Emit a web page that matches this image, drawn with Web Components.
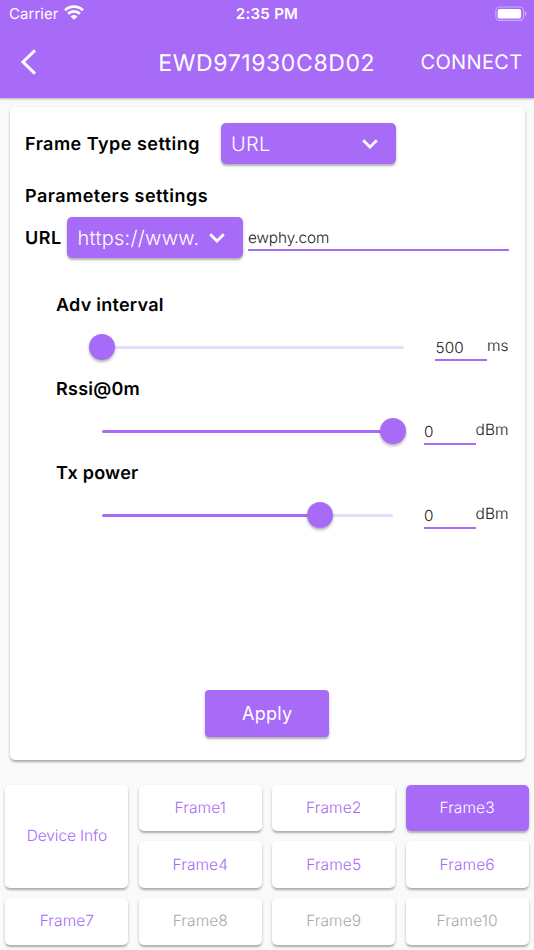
<!DOCTYPE html>
<html lang="en">
<head>
<meta charset="utf-8">
<title>Beacon settings</title>
<style>
  html {
    --accent: #a76bf7;
    --accent-soft: #e9dbfd;
    --shadow: 0 3px 1px -1px rgba(0,0,0,.1), 0 2px 3px rgba(0,0,0,.2), 0 1px 4px rgba(0,0,0,.06);
  }
  body {
    margin: 0;
    height: 950px;
    overflow: hidden;
    background: #fafafa;
    font-family: Inter, "Liberation Sans", sans-serif;
    text-rendering: geometricPrecision;
  }
</style>
</head>
<body>
<beacon-app></beacon-app>

<script>
function makeTemplate(html) {
  const template = document.createElement("template");
  template.innerHTML = html;
  return template;
}

class BaseElement extends HTMLElement {
  constructor() {
    super();
    this.attachShadow({ mode: "open" });
    this.shadowRoot.appendChild(this.constructor.template.content.cloneNode(true));
  }
}

class StatusBar extends BaseElement {
  static template = makeTemplate(`
    <style>
    :host {
      display: grid;
      grid-template-columns: 1fr auto 1fr;
      align-items: center;
      height: 28px;
      padding: 0 7px 0 9px;
      color: white;
      font-size: 15px;
    }
    .left {
      display: flex;
      align-items: center;
      gap: 5.5px;
    }
    .carrier { letter-spacing: .05px; margin-top: -1px; }
    .time {
      margin: -1px 2px 0 0;
      font-weight: 600;
      letter-spacing: .3px;
    }
    .battery { justify-self: end; display: block; margin-top: -1px; }
    .wifi { display: block; margin-top: -3px; }
    </style>
    <div class="left">
      <span class="carrier">Carrier</span>
      <svg class="wifi" width="20" height="15" viewBox="0 0 20 15">
        <g fill="none" stroke="white" stroke-width="2.7">
          <path d="M1.1 5.3A12.7 12.7 0 0 1 18.9 5.3"/>
          <path d="M4.1 8.8A8.2 8.2 0 0 1 15.9 8.8"/>
        </g>
        <path d="M6.6 11.4a4.8 4.8 0 0 1 6.8 0L10 14.8z" fill="white"/>
      </svg>
    </div>
    <span class="time">2:35 PM</span>
    <svg class="battery" width="32" height="16" viewBox="0 0 32 16">
      <rect x=".9" y="1" width="27.6" height="13.4" rx="3.8" fill="none" stroke="white" stroke-opacity=".45" stroke-width="1.1"/>
      <rect x="2.7" y="2.9" width="23.4" height="9.7" rx="2.2" fill="white"/>
      <path d="M30 5.3a2.7 2.7 0 0 1 0 4.8z" fill="white" fill-opacity=".5"/>
    </svg>
  `);
}

class NavBar extends BaseElement {
  static template = makeTemplate(`
    <style>
    :host {
      display: grid;
      grid-template-columns: 1fr auto 1fr;
      align-items: center;
      height: 70px;
      padding: 0 11.5px 0 20px;
      color: white;
    }
    svg { display: block; margin-top: -2px; }
    .title {
      margin-right: 9px;
      font-size: 23px;
      letter-spacing: .6px;
    }
    .action {
      justify-self: end;
      margin-top: -2px;
      font-size: 20px;
      letter-spacing: .35px;
    }
    </style>
    <svg width="18" height="28" viewBox="0 0 18 28">
      <path d="M15 2.4 3 14l12 11.6" fill="none" stroke="white" stroke-width="3"/>
    </svg>
    <span class="title"><slot></slot></span>
    <span class="action"><slot name="action"></slot></span>
  `);
}

class DropDown extends BaseElement {
  static template = makeTemplate(`
    <style>
    :host {
      display: flex;
      align-items: center;
      justify-content: space-between;
      box-sizing: border-box;
      width: 175.5px;
      height: 41px;
      padding: 0 18px 0 10.5px;
      border-radius: 5px;
      background: var(--accent);
      box-shadow: var(--shadow);
      color: white;
      font-size: 20px;
      font-weight: 300;
      letter-spacing: .3px;
      white-space: nowrap;
    }
    svg { display: block; flex: none; }
    </style>
    <span><slot></slot></span>
    <svg width="16" height="12" viewBox="0 0 16 12">
      <path d="M1.2 2.2 8 9l6.8-6.8" fill="none" stroke="white" stroke-width="2.7"/>
    </svg>
  `);
}

class TextField extends BaseElement {
  static template = makeTemplate(`
    <style>
    :host {
      display: block;
      box-sizing: border-box;
      height: 27px;
      border-bottom: 2px solid var(--accent);
      color: #222;
      font-size: 15.3px;
      line-height: 27px;
      font-weight: 350;
      letter-spacing: -.1px;
    }
    </style>
    <slot></slot>
  `);
}

class RangeSetting extends BaseElement {
  static template = makeTemplate(`
    <style>
    :host {
      display: block;
      height: 84px;
      padding-left: 31px;
    }
    .name {
      height: 26px;
      line-height: 27px;
      font-size: 18px;
      font-weight: 640;
      letter-spacing: .25px;
    }
    .row {
      display: flex;
      align-items: center;
      height: 58px;
      padding-left: 46px;
    }
    .track {
      display: flex;
      align-items: center;
      flex: 1;
      height: 3px;
      margin-right: 31px;
      border-radius: 2px;
      background: linear-gradient(to right, var(--accent) var(--value), var(--accent-soft) var(--value));
    }
    .thumb {
      flex: none;
      width: 26px;
      height: 26px;
      margin-left: calc(var(--value) - 13px);
      margin-right: -13px;
      border-radius: 50%;
      background: var(--accent);
      box-shadow: 0 2px 3px rgba(0,0,0,.3);
    }
    text-field {
      width: 51.5px;
      letter-spacing: .1px;
    }
    .unit {
      color: #222;
      font-size: 15.5px;
      font-weight: 350;
      margin-top: -3px;
    }
    </style>
    <div class="name"></div>
    <div class="row">
      <div class="track"><div class="thumb"></div></div>
      <text-field><slot></slot></text-field>
      <span class="unit"></span>
    </div>
  `);

  connectedCallback() {
    this.style.setProperty("--value", this.getAttribute("value") + "%");
    this.shadowRoot.querySelector(".name").textContent = this.getAttribute("name");
    this.shadowRoot.querySelector(".unit").textContent = this.getAttribute("unit");
  }
}

class SettingsCard extends BaseElement {
  static template = makeTemplate(`
    <style>
    :host {
      display: flex;
      flex-direction: column;
      box-sizing: border-box;
      height: 653px;
      margin: 9px 9.5px 0;
      padding: 16px 16px 23.5px 15.5px;
      border-radius: 5px;
      background: white;
      box-shadow: var(--shadow);
      color: black;
    }
    .label {
      font-size: 18px;
      font-weight: 640;
      letter-spacing: .48px;
      white-space: nowrap;
    }
    .type, .url {
      display: flex;
      align-items: center;
      height: 41px;
    }
    .type .label { width: 195.5px; margin-top: 1px; }
    .section {
      height: 53px;
      line-height: 65px;
    }
    .url .label { width: 42px; margin-top: 1px; }
    .url text-field {
      flex: 1;
      margin: 0 0 0 5.5px;
    }
    .ranges { margin-top: 34px; }
    .apply {
      align-self: center;
      width: 123.5px;
      height: 46.5px;
      margin-top: auto;
      padding: 0 0 0 1px;
      border: 0;
      border-radius: 4px;
      background: var(--accent);
      box-shadow: var(--shadow);
      color: white;
      font: 400 18px Inter, "Liberation Sans", sans-serif;
      letter-spacing: .25px;
    }
    </style>
    <div class="type">
      <span class="label">Frame Type setting</span>
      <drop-down>URL</drop-down>
    </div>
    <div class="label section">Parameters settings</div>
    <div class="url">
      <span class="label">URL</span>
      <drop-down>https://www.</drop-down>
      <text-field>ewphy.com</text-field>
    </div>
    <div class="ranges">
      <range-setting name="Adv interval" value="0" unit="ms">500</range-setting>
      <range-setting name="Rssi@0m" value="100" unit="dBm">0</range-setting>
      <range-setting name="Tx power" value="75" unit="dBm">0</range-setting>
    </div>
    <button class="apply">Apply</button>
  `);
}

class FrameTab extends BaseElement {
  static template = makeTemplate(`
    <style>
    :host {
      display: flex;
      align-items: center;
      justify-content: center;
      border-radius: 5px;
      background: white;
      box-shadow: var(--shadow);
      color: var(--accent);
      font-size: 15.5px;
      line-height: 18px;
      font-weight: 350;
      letter-spacing: .1px;
    }
    :host([tall]) {
      grid-row: span 2;
      letter-spacing: -.1px;
    }
    :host([active]) {
      background: var(--accent);
      color: white;
    }
    :host([disabled]) { color: #aaa; }
    </style>
    <span><slot></slot></span>
  `);
}

class FrameTabs extends BaseElement {
  static template = makeTemplate(`
    <style>
    :host {
      display: grid;
      grid-template-columns: repeat(4, 1fr);
      grid-auto-rows: 46.4px;
      gap: 10.4px;
      margin: 24.6px 5.4px 0;
    }
    </style>
    <slot></slot>
  `);
}

class BeaconApp extends BaseElement {
  static template = makeTemplate(`
    <style>
    :host { display: block; }
    header {
      background: var(--accent);
      box-shadow: 0 1px 2px rgba(0,0,0,.3);
    }
    </style>
    <header>
      <status-bar></status-bar>
      <nav-bar>EWD971930C8D02<span slot="action">CONNECT</span></nav-bar>
    </header>
    <settings-card></settings-card>
    <frame-tabs></frame-tabs>
  `);

  connectedCallback() {
    const tabs = this.shadowRoot.querySelector("frame-tabs");
    const info = document.createElement("frame-tab");
    info.textContent = "Device Info";
    info.toggleAttribute("tall", true);
    tabs.appendChild(info);

    for (let i = 1; i <= 10; i++) {
      const tab = document.createElement("frame-tab");
      tab.textContent = "Frame" + i;
      tab.toggleAttribute("active", i === 3);
      tab.toggleAttribute("disabled", i > 7);
      tabs.appendChild(tab);
    }
  }
}

customElements.define("status-bar", StatusBar);
customElements.define("nav-bar", NavBar);
customElements.define("drop-down", DropDown);
customElements.define("text-field", TextField);
customElements.define("range-setting", RangeSetting);
customElements.define("settings-card", SettingsCard);
customElements.define("frame-tab", FrameTab);
customElements.define("frame-tabs", FrameTabs);
customElements.define("beacon-app", BeaconApp);
</script>
</body>
</html>
